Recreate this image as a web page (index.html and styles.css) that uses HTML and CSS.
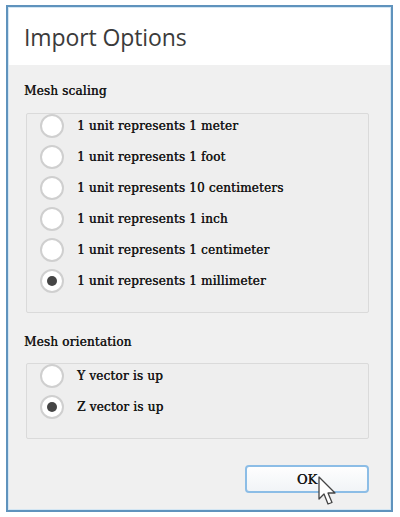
FILE: index.html
```html
<!doctype html>
<html>
<meta name="viewport" content="width=device-width, initial-scale=1">

<head>
  <title>Import Options</title>
  <link rel="stylesheet" href="styles.css">
</head>

<body>
  <div class="dialog">
    <div class="titlebar">
      <h1>Import Options</h1>
    </div>
    <div class="content">
      <label class="group-label">Mesh scaling</label>
      <div class="group">
        <div class="option"><span class="radio"></span>1 unit represents 1 meter</div>
        <div class="option"><span class="radio"></span>1 unit represents 1 foot</div>
        <div class="option"><span class="radio"></span>1 unit represents 10 centimeters</div>
        <div class="option"><span class="radio"></span>1 unit represents 1 inch</div>
        <div class="option"><span class="radio"></span>1 unit represents 1 centimeter</div>
        <div class="option"><span class="radio checked"></span>1 unit represents 1 millimeter</div>
      </div>
      <label class="group-label second">Mesh orientation</label>
      <div class="group">
        <div class="option"><span class="radio"></span>Y vector is up</div>
        <div class="option"><span class="radio checked"></span>Z vector is up</div>
      </div>
      <div class="buttons">
        <button class="ok">OK</button>
        <!-- mouse pointer over the button -->
        <svg class="cursor" width="20" height="32" viewBox="0 0 20 32">
          <path d="M1 1 L1 23 L6 18 L10 28 L14 26.5 L10 17 L17 17 Z" fill="#fff" stroke="#444" stroke-width="1.3" stroke-linejoin="round"/>
        </svg>
      </div>
    </div>
  </div>
</body>

</html>
```

FILE: styles.css
```css
/* whole page */
body {
  margin: 0;
  background: #fff;
}

/* window frame */
.dialog {
  margin: 5px 0 0 6px;
  width: 387px;
  height: 507px;
  box-sizing: border-box;
  border: 2px solid #5f93bd;
  box-shadow: inset 0 0 0 1px #d3e6f3;
  display: flex;
  flex-direction: column;
  background: #f0f0f0;
}

.titlebar {
  height: 57px;
  background: #fff;
  margin: 1px 1px 0 1px;
  display: flex;
  align-items: center;
}

.titlebar h1 {
  margin: 0 0 0 15px;
  font: normal 23px "Open Sans", sans-serif;
  color: #3b3b3b;
  letter-spacing: -0.1px;
}

.content {
  flex: 1;
  padding: 18px 22px 0 16px;
  font: 12px "DejaVu Serif", serif;
  color: #161616;
  letter-spacing: 0.2px;
  text-shadow: 0.4px 0 0 #161616;
}

.group-label {
  display: block;
  line-height: 16px;
  margin-bottom: 14px;
}

.group-label.second {
  margin-top: 21px;
  margin-bottom: 13px;
}

.group {
  margin-left: 2px;
  border: 1px solid #dadada;
  border-radius: 2px;
  background: #eeeeee;
  padding: 0 0 19px 13px;
  display: flex;
  flex-direction: column;
  gap: 7px;
}

.option {
  height: 24px;
  display: flex;
  align-items: center;
}

.radio {
  width: 24px;
  height: 24px;
  box-sizing: border-box;
  border: 2px solid #cfcfcf;
  border-radius: 50%;
  background: #fff;
  margin-right: 13px;
  display: flex;
  align-items: center;
  justify-content: center;
}

.radio.checked:after {
  content: "";
  width: 10px;
  height: 10px;
  border-radius: 50%;
  background: #454545;
}

.buttons {
  position: relative;
  display: flex;
  justify-content: flex-end;
  margin-top: 26px;
}

.ok {
  width: 124px;
  height: 28px;
  border: 2px solid #8cbde6;
  border-radius: 4px;
  background: linear-gradient(#fefefe, #f1f4f7);
  font: 13px "DejaVu Serif", serif;
  color: #161616;
  text-shadow: 0.4px 0 0 #161616;
  padding: 0;
}

.cursor {
  position: absolute;
  left: 294px;
  top: 11px;
}
```
